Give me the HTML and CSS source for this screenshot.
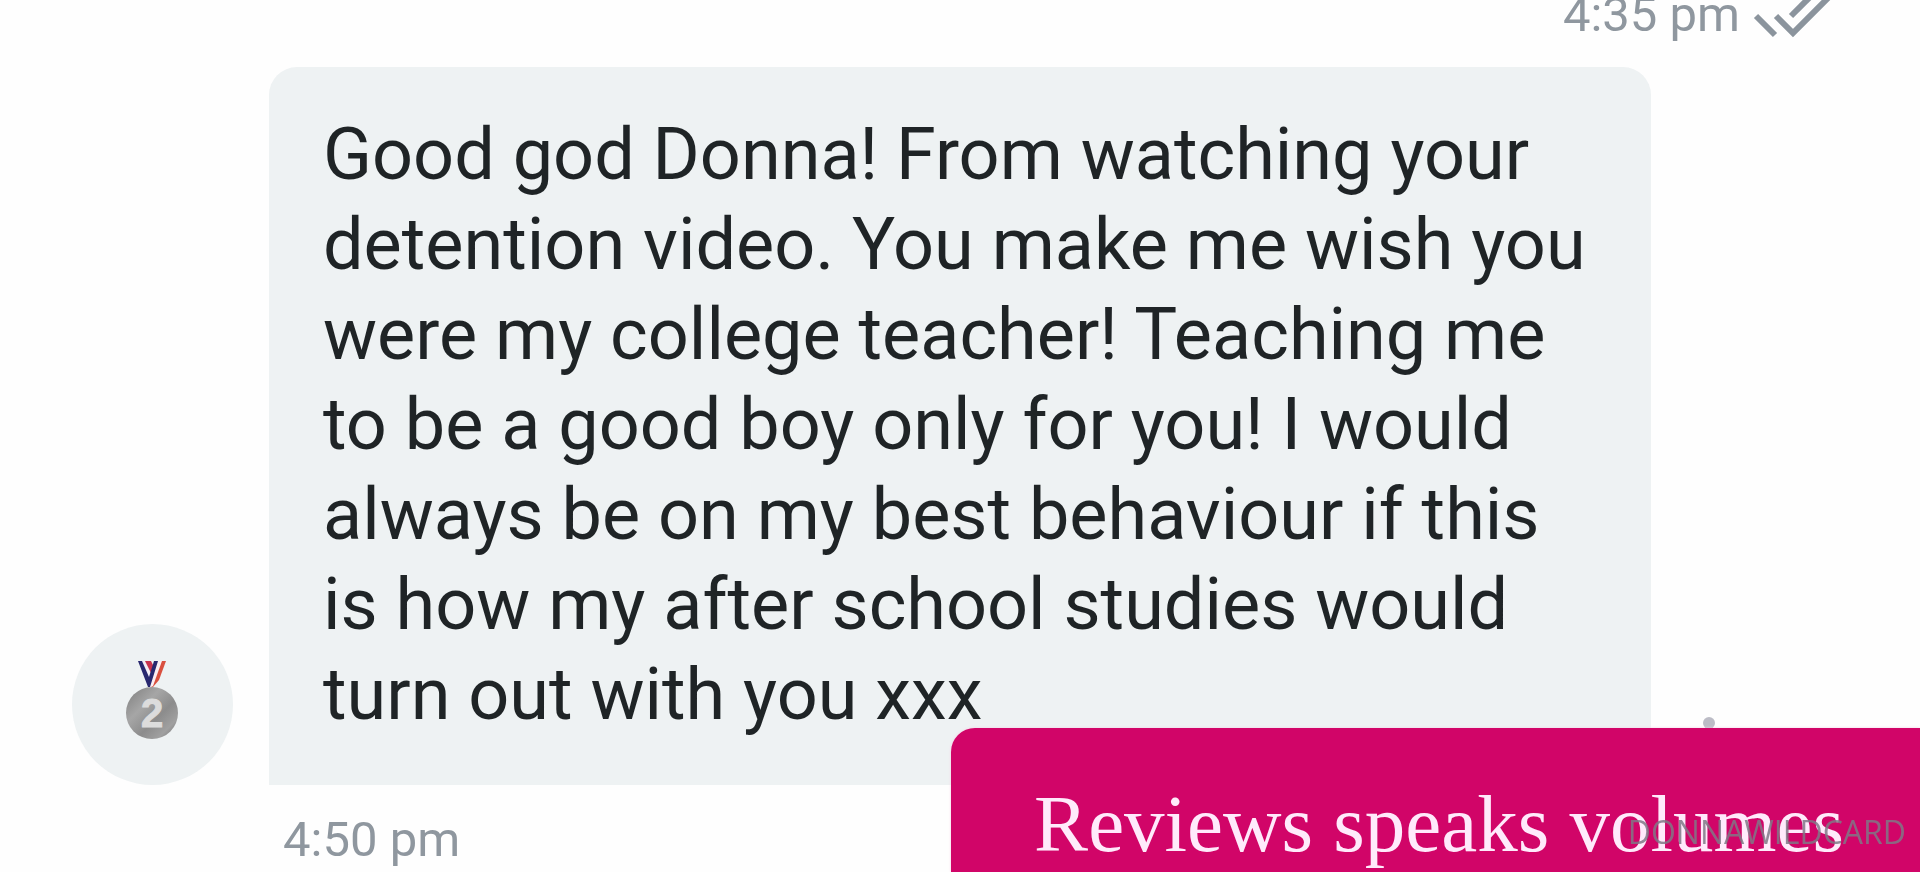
FILE: index.html
```
<!DOCTYPE html>
<html lang="en">

<head>
  <meta charset="UTF-8">
  <meta name="viewport" content="width=device-width, initial-scale=1.0">
  <title>Reviews</title>
  <link rel="stylesheet" href="styles.css">
</head>

<body>
  <main class="chat">
    <div class="status">
      <time class="time" datetime="16:35">4:35 pm</time>
      <svg class="ticks" viewBox="0 0 80 40" aria-hidden="true">
        <path d="M4 16 L23 35" />
        <path d="M24 16 L41 33 L80 -6" />
        <path d="M39 16 L61 -6" />
      </svg>
    </div>

    <div class="message">
      <div class="avatar">
        <svg class="medal" viewBox="0 0 54 80" aria-hidden="true">
          <defs>
            <linearGradient id="silver" x1="0" y1="0" x2="1" y2="1">
              <stop offset="0" stop-color="#7d7d7d" />
              <stop offset="0.35" stop-color="#a6a6a6" />
              <stop offset="0.6" stop-color="#8c8c8c" />
              <stop offset="0.8" stop-color="#a0a0a0" />
              <stop offset="1" stop-color="#6f6f6f" />
            </linearGradient>
          </defs>
          <path fill="#c8344e" d="M19 1h7l4 8-4 7z" />
          <path fill="#f3eef6" d="M16 1h4l8 16-2 6z" />
          <path fill="#d9503f" d="M36 1h5l-7 19-6 7-3-1z" />
          <path fill="#fbeef2" d="M32 1h5l-9 25-3 1-1-3z" />
          <path fill="#28286f" d="M13 1h4l7 16 5-16h4l-8 26h-2z" />
          <circle cx="27" cy="53" r="26" fill="url(#silver)" />
          <text class="medal-number" x="27" y="67" text-anchor="middle">2</text>
        </svg>
      </div>
      <p class="bubble">Good god Donna! From watching your detention video. You make me wish you were my college teacher! Teaching me to be a good boy only for you! I would always be on my best behaviour if this is how my after school studies would turn out with you xxx</p>
      <button class="more" type="button" aria-label="More">
        <svg viewBox="0 0 12 68" aria-hidden="true">
          <circle cx="6" cy="6" r="6" />
          <circle cx="6" cy="28" r="6" />
          <circle cx="6" cy="50" r="6" />
        </svg>
      </button>
    </div>

    <time class="time received" datetime="16:50">4:50 pm</time>
  </main>

  <div class="banner">Reviews speaks volumes</div>
  <div class="watermark">DONNAWILDCARD</div>
</body>

</html>
```

FILE: styles.css
```
* {
  box-sizing: border-box;
  margin: 0;
  padding: 0;
}

body {
  min-height: 100vh;
  overflow: hidden;
  font-family: Roboto, sans-serif;
  color: #1f2426;
  background-color: #fefefe;
}

.chat {
  padding: 0 88px 0 72px;
}

.time {
  display: block;
  font-size: 49px;
  line-height: 30px;
  color: #8f979f;
}

/* time of the last sent message */

.status {
  display: flex;
  justify-content: flex-end;
  gap: 12px;
  height: 67px;
}

.ticks {
  width: 80px;
  height: 40px;
  fill: none;
  stroke: #8b949d;
  stroke-width: 6;
}

/* received message */

.message {
  display: flex;
  align-items: flex-end;
  padding-right: 117px;
}

.avatar {
  display: flex;
  flex: none;
  justify-content: center;
  width: 161px;
  height: 161px;
  margin-right: 36px;
  padding: 36px 2px 0 0;
  border-radius: 50%;
  background-color: #eef2f3;
}

.medal {
  width: 54px;
  height: 80px;
}

.medal-number {
  font-family: "Liberation Sans", sans-serif;
  font-size: 40px;
  font-weight: bold;
  fill: #dcdcdc;
  stroke: #dcdcdc;
}

.bubble {
  flex: 1;
  padding: 43px 56px 45px 54px;
  border-radius: 28px 28px 0 0;
  font-size: 72px;
  line-height: 90px;
  background-color: #eef2f3;
}

.more {
  flex: none;
  width: 12px;
  height: 68px;
  margin-left: 52px;
  border: none;
  background: none;
  cursor: pointer;
}

.more svg {
  display: block;
  fill: #bcbcc6;
}

.received {
  margin: 40px 0 0 211px;
}

/* caption over the chat */

.banner {
  position: fixed;
  right: 0;
  bottom: 0;
  padding: 50px 76px 2px 83px;
  border-top-left-radius: 24px;
  font-family: "Liberation Serif", serif;
  font-size: 81px;
  line-height: 92px;
  white-space: nowrap;
  color: #ffeafb;
  background-color: #d10568;
  box-shadow: 0 0 3px #f7cfe6;
}

.watermark {
  position: fixed;
  right: 14px;
  bottom: 20px;
  font-family: "Open Sans", sans-serif;
  font-size: 32px;
  line-height: 40px;
  color: rgba(128, 120, 134, 0.85);
}
```
